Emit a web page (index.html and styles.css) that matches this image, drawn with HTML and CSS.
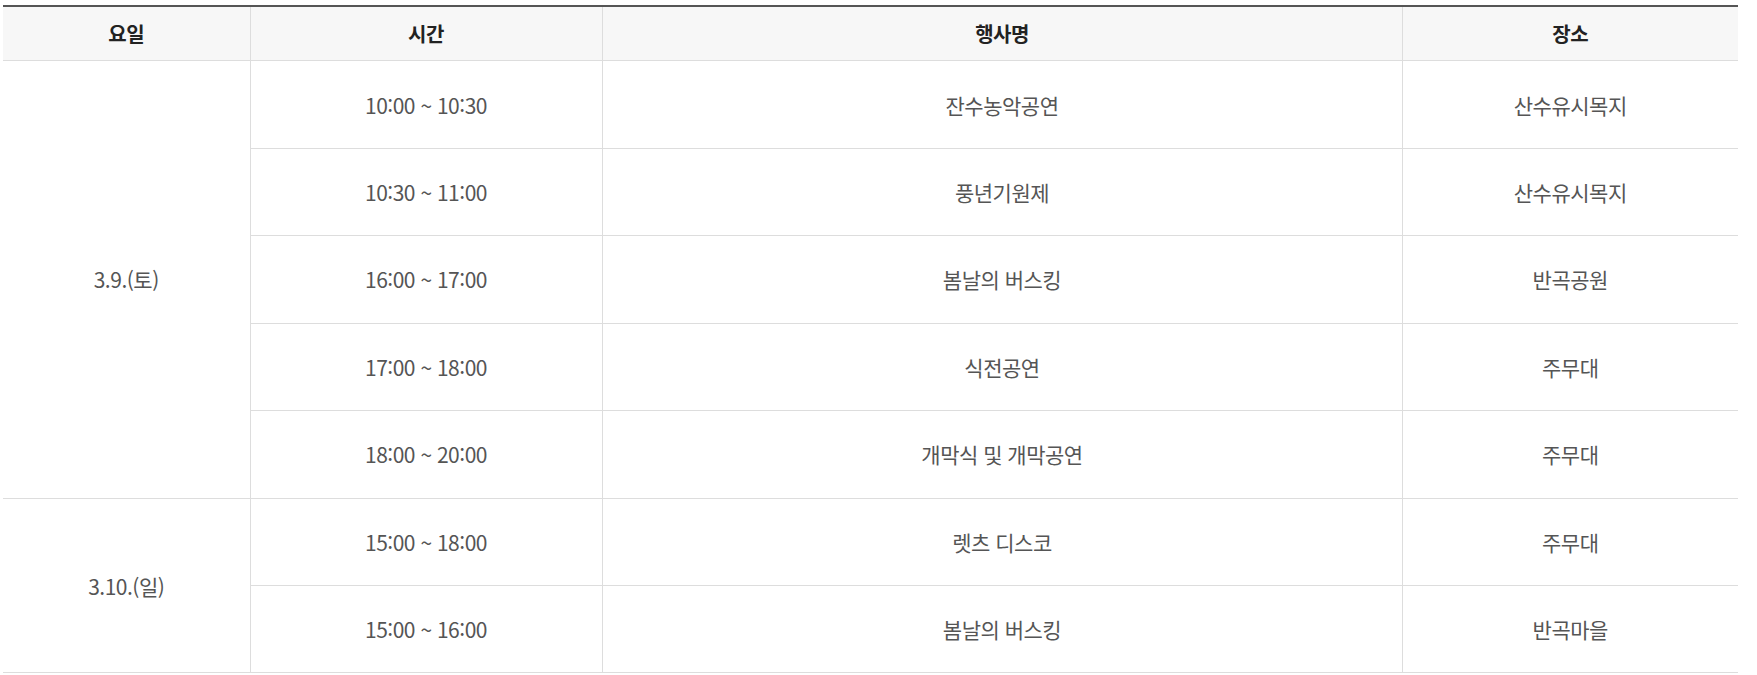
FILE: index.html
```html
<!DOCTYPE html>
<html lang="ko">
<head>
<meta charset="utf-8">
<link rel="stylesheet" href="styles.css">
</head>
<body>
<div class="wrap">
<table class="sched">
  <colgroup>
    <col class="c1"><col class="c2"><col class="c3"><col class="c4">
  </colgroup>
  <thead>
    <tr><th>요일</th><th>시간</th><th>행사명</th><th>장소</th></tr>
  </thead>
  <tbody>
    <tr><td rowspan="5">3.9.(토)</td><td>10:00 ~ 10:30</td><td>잔수농악공연</td><td>산수유시목지</td></tr>
    <tr><td>10:30 ~ 11:00</td><td>풍년기원제</td><td>산수유시목지</td></tr>
    <tr><td>16:00 ~ 17:00</td><td>봄날의 버스킹</td><td>반곡공원</td></tr>
    <tr><td>17:00 ~ 18:00</td><td>식전공연</td><td>주무대</td></tr>
    <tr><td>18:00 ~ 20:00</td><td>개막식 및 개막공연</td><td>주무대</td></tr>
    <tr><td rowspan="2">3.10.(일)</td><td>15:00 ~ 18:00</td><td>렛츠 디스코</td><td>주무대</td></tr>
    <tr><td>15:00 ~ 16:00</td><td>봄날의 버스킹</td><td>반곡마을</td></tr>
  </tbody>
</table>
</div>
</body>
</html>
```

FILE: styles.css
```css
html, body {
  margin: 0;
  padding: 0;
  background: #fff;
}
.wrap {
  padding: 5px 19px 0 3px;
}
.sched {
  width: 1735px;
  border-collapse: collapse;
  table-layout: fixed;
  border-top: 2px solid #555;
  font-family: "Noto Sans CJK KR", "Noto Sans", sans-serif;
  font-size: 21px;
  letter-spacing: -0.5px;
  color: #555;
}
.c1 { width: 247px; }
.c2 { width: 352px; }
.c3 { width: 800px; }
.c4 { width: 336px; }
.sched th {
  height: 53.4px;
  padding: 0;
  background: #f7f7f7;
  color: #222;
  font-weight: 700;
  font-size: 20px;
  text-align: center;
  border-bottom: 1px solid #ddd;
  border-left: 1px solid #ddd;
}
.sched td {
  height: 86.45px;
  padding: 0;
  text-align: center;
  vertical-align: middle;
  border-bottom: 1px solid #ddd;
  border-left: 1px solid #ddd;
}
.sched th:first-child,
.sched tr > td[rowspan] {
  border-left: none;
}
```
